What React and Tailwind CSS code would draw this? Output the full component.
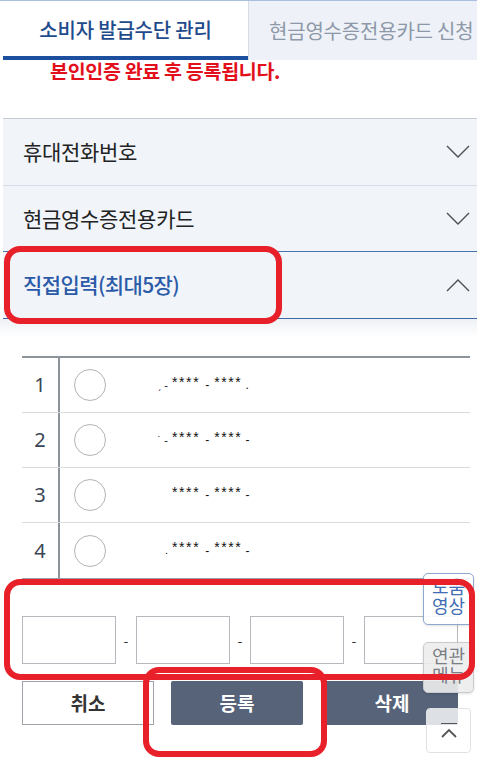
import React from "react";

const Chevron = ({ up }) => (
  <svg width="24" height="14" viewBox="0 0 24 14" fill="none">
    <path
      d={up ? "M1 13 L12 2 L23 13" : "M1 1 L12 12 L23 1"}
      stroke="#4a4f57"
      strokeWidth="1.4"
    />
  </svg>
);

const rows = [
  { n: "1", pre: "ˏ -", suf: "." },
  { n: "2", pre: "˙ -", suf: "-" },
  { n: "3", pre: "", suf: "-" },
  { n: "4", pre: ".", suf: "-" },
];

export default function App() {
  return (
    <div className="relative w-[477px] h-[759px] overflow-hidden bg-white font-['Noto_Sans_CJK_KR',sans-serif]">
      {/* Tabs */}
      <div className="relative z-10 flex h-[60px] border-t border-[#a9bfdf]">
        <div className="w-[245px] flex items-center justify-center bg-white border-b-[4px] border-[#1c4f9e] ml-[3px] pt-[2px]">
          <span className="text-[20px] font-medium text-[#1f4b8c] tracking-[-0.2px]">소비자 발급수단 관리</span>
        </div>
        <div className="flex-1 flex items-center pl-[20px] bg-[#eef1f7] border-l border-[#d7dde6]">
          <span className="text-[20px] text-[#8d98a8] whitespace-nowrap tracking-[-0.2px]">현금영수증전용카드 신청</span>
        </div>
      </div>

      {/* notice */}
      <div className="h-[58px] pl-[50px]">
        <span className="block text-[19.5px] font-bold text-[#e3101b] leading-[22px] tracking-[-0.3px]">본인인증 완료 후 등록됩니다.</span>
      </div>

      {/* Accordion */}
      <div className="ml-[3px] bg-[#f1f4f9] border-t border-[#c5cbd3]">
        <div className="h-[67px] flex items-center justify-between pl-[20px] pr-[7px] border-b border-[#d3dbe6]">
          <span className="text-[21px] text-[#222] tracking-[-0.3px]">휴대전화번호</span>
          <Chevron />
        </div>
        <div className="h-[66px] flex items-center justify-between pl-[20px] pr-[7px] border-b border-[#4a72ad]">
          <span className="text-[21px] text-[#222] tracking-[-0.3px]">현금영수증전용카드</span>
          <Chevron />
        </div>
        <div className="h-[67px] flex items-center justify-between pl-[20px] pr-[7px] border-b border-[#3d67a6]">
          <span className="text-[21px] font-medium text-[#2b5ba8] tracking-[-0.6px]">직접입력(최대5장)</span>
          <Chevron up />
        </div>
      </div>
      <div className="h-[18px] bg-gradient-to-b from-[#eef1f5] to-white" />

      {/* Table */}
      <div className="ml-[22px] w-[448px] mt-[19px] border-t-[2px] border-[#8d939b] border-b-[2px] border-b-[#9aa0a7]">
        {rows.map((r, i) => (
          <div
            key={r.n}
            className={`flex h-[55px] ${i < 3 ? "border-b border-[#d8dce1]" : ""}`}
          >
            <div className="w-[38px] flex items-center justify-center text-[20px] text-[#3a4555] font-['Noto_Sans',sans-serif] border-r-[2px] border-[#8d939b]">
              {r.n}
            </div>
            <div className="flex items-center pl-[14px]">
              <div className="w-[32px] h-[32px] rounded-full border-[1.5px] border-[#b0b3b8] bg-white" />
              <div className="flex items-center ml-[38px] text-[14px] text-[#111] font-['Liberation_Sans',sans-serif] -mt-[6px]">
                <span className="w-[26px] text-right pr-[2px] text-[11px] translate-y-[3px]">{r.pre}</span>
                <span className="tracking-[1.6px] ml-[2px]">****</span>
                <span className="mx-[5px] translate-y-[3px] text-[12px]">-</span>
                <span className="tracking-[1.6px]">****</span>
                <span className="ml-[3px] translate-y-[3px] text-[12px]">{r.suf}</span>
              </div>
            </div>
          </div>
        ))}
      </div>

      {/* Inputs */}
      <div className="flex items-center ml-[22px] mt-[36px]">
        <div className="w-[94px] h-[48px] border border-[#b5b8bd] bg-white" />
        <span className="w-[20px] text-center text-[14px] text-[#333]">-</span>
        <div className="w-[94px] h-[48px] border border-[#b5b8bd] bg-white" />
        <span className="w-[20px] text-center text-[14px] text-[#333]">-</span>
        <div className="w-[94px] h-[48px] border border-[#b5b8bd] bg-white" />
        <span className="w-[20px] text-center text-[14px] text-[#333]">-</span>
        <div className="w-[94px] h-[48px] border border-[#b5b8bd] bg-white" />
      </div>

      {/* Buttons */}
      <div className="flex ml-[22px] mt-[17px]">
        <button className="w-[132px] h-[44px] border border-[#9ea3aa] bg-white text-[19px] font-bold text-[#333]">취소</button>
        <button className="w-[132px] h-[44px] ml-[17px] rounded-[2px] bg-[#566379] text-[19px] font-bold text-white">등록</button>
        <button className="w-[132px] h-[44px] ml-[23px] bg-[#566379] text-[19px] font-bold text-white">삭제</button>
      </div>

      {/* Floating quick buttons */}
      <div className="absolute left-[423px] top-[573px] w-[51px] h-[52px] overflow-hidden rounded-[5px] border border-[#8ea9d0] bg-white/90 shadow-sm">
        <div className="flex flex-col items-center mt-[3px] text-[18px] leading-[19px] text-[#3f6db3]">
          <span>도움</span>
          <span>영상</span>
        </div>
      </div>
      <div className="absolute left-[423px] top-[642px] w-[51px] h-[51px] overflow-hidden rounded-[5px] border border-[#c8cacd] bg-[#ececec]/90 shadow-sm">
        <div className="flex flex-col items-center mt-[3px] text-[18px] leading-[19px] text-[#7a7d82]">
          <span>연관</span>
          <span>메뉴</span>
        </div>
      </div>
      <div className="absolute left-[426px] top-[708px] w-[45px] h-[45px] rounded-[4px] border border-[#e0e2e5] bg-white/80 flex flex-col items-center justify-center gap-[4px]">
        <div className="w-[16px] h-[1.5px] bg-[#555]" />
        <svg width="18" height="10" viewBox="0 0 18 10" fill="none">
          <path d="M2 9 L9 2 L16 9" stroke="#555" strokeWidth="1.8" />
        </svg>
      </div>

      {/* Red annotation boxes */}
      <div className="absolute left-[4px] top-[246px] w-[278px] h-[78px] rounded-[16px] border-[6px] border-[#e8202a]" />
      <div className="absolute left-[4px] top-[579px] w-[471px] h-[101px] rounded-[16px] border-[6px] border-[#e8202a]" />
      <div className="absolute left-[143px] top-[667px] w-[184px] h-[90px] rounded-[16px] border-[6px] border-[#e8202a]" />
    </div>
  );
}
